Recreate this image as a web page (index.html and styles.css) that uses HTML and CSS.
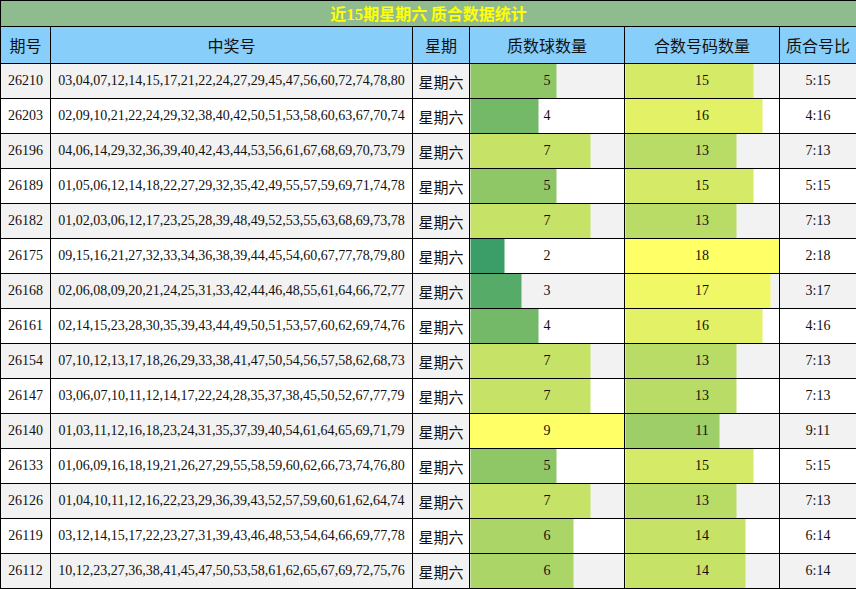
FILE: index.html
```html
<!DOCTYPE html>
<html lang="zh">
<head>
<meta charset="utf-8">
<link rel="stylesheet" href="styles.css">
</head>
<body>
<table class="stats">
<colgroup>
<col class="c-issue"><col class="c-nums"><col class="c-day"><col class="c-prime"><col class="c-comp"><col class="c-ratio">
</colgroup>
<thead>
<tr class="title-row"><th colspan="6">近<span class="num">15</span>期星期六 质合数据统计</th></tr>
<tr class="head-row"><th>期号</th><th>中奖号</th><th>星期</th><th>质数球数量</th><th>合数号码数量</th><th>质合号比</th></tr>
</thead>
<tbody>
<tr><td>26210</td><td>03,04,07,12,14,15,17,21,22,24,27,29,45,47,56,60,72,74,78,80</td><td class="day">星期六</td><td class="bar" style="--w:55.56%;--c:#8FC767">5</td><td class="bar" style="--w:83.33%;--c:#D5EA67">15</td><td>5:15</td></tr>
<tr><td>26203</td><td>02,09,10,21,22,24,29,32,38,40,42,50,51,53,58,60,63,67,70,74</td><td class="day">星期六</td><td class="bar" style="--w:44.44%;--c:#73B968">4</td><td class="bar" style="--w:88.89%;--c:#E3F166">16</td><td>4:16</td></tr>
<tr><td>26196</td><td>04,06,14,29,32,36,39,40,42,43,44,53,56,61,67,68,69,70,73,79</td><td class="day">星期六</td><td class="bar" style="--w:77.78%;--c:#C7E367">7</td><td class="bar" style="--w:72.22%;--c:#B9DC67">13</td><td>7:13</td></tr>
<tr><td>26189</td><td>01,05,06,12,14,18,22,27,29,32,35,42,49,55,57,59,69,71,74,78</td><td class="day">星期六</td><td class="bar" style="--w:55.56%;--c:#8FC767">5</td><td class="bar" style="--w:83.33%;--c:#D5EA67">15</td><td>5:15</td></tr>
<tr><td>26182</td><td>01,02,03,06,12,17,23,25,28,39,48,49,52,53,55,63,68,69,73,78</td><td class="day">星期六</td><td class="bar" style="--w:77.78%;--c:#C7E367">7</td><td class="bar" style="--w:72.22%;--c:#B9DC67">13</td><td>7:13</td></tr>
<tr><td>26175</td><td>09,15,16,21,27,32,33,34,36,38,39,44,45,54,60,67,77,78,79,80</td><td class="day">星期六</td><td class="bar" style="--w:22.22%;--c:#3B9D68">2</td><td class="bar" style="--w:100%;--c:#FFFF66">18</td><td>2:18</td></tr>
<tr><td>26168</td><td>02,06,08,09,20,21,24,25,31,33,42,44,46,48,55,61,64,66,72,77</td><td class="day">星期六</td><td class="bar" style="--w:33.33%;--c:#57AB68">3</td><td class="bar" style="--w:94.44%;--c:#F1F866">17</td><td>3:17</td></tr>
<tr><td>26161</td><td>02,14,15,23,28,30,35,39,43,44,49,50,51,53,57,60,62,69,74,76</td><td class="day">星期六</td><td class="bar" style="--w:44.44%;--c:#73B968">4</td><td class="bar" style="--w:88.89%;--c:#E3F166">16</td><td>4:16</td></tr>
<tr><td>26154</td><td>07,10,12,13,17,18,26,29,33,38,41,47,50,54,56,57,58,62,68,73</td><td class="day">星期六</td><td class="bar" style="--w:77.78%;--c:#C7E367">7</td><td class="bar" style="--w:72.22%;--c:#B9DC67">13</td><td>7:13</td></tr>
<tr><td>26147</td><td>03,06,07,10,11,12,14,17,22,24,28,35,37,38,45,50,52,67,77,79</td><td class="day">星期六</td><td class="bar" style="--w:77.78%;--c:#C7E367">7</td><td class="bar" style="--w:72.22%;--c:#B9DC67">13</td><td>7:13</td></tr>
<tr><td>26140</td><td>01,03,11,12,16,18,23,24,31,35,37,39,40,54,61,64,65,69,71,79</td><td class="day">星期六</td><td class="bar" style="--w:100%;--c:#FFFF66">9</td><td class="bar" style="--w:61.11%;--c:#9DCE67">11</td><td>9:11</td></tr>
<tr><td>26133</td><td>01,06,09,16,18,19,21,26,27,29,55,58,59,60,62,66,73,74,76,80</td><td class="day">星期六</td><td class="bar" style="--w:55.56%;--c:#8FC767">5</td><td class="bar" style="--w:83.33%;--c:#D5EA67">15</td><td>5:15</td></tr>
<tr><td>26126</td><td>01,04,10,11,12,16,22,23,29,36,39,43,52,57,59,60,61,62,64,74</td><td class="day">星期六</td><td class="bar" style="--w:77.78%;--c:#C7E367">7</td><td class="bar" style="--w:72.22%;--c:#B9DC67">13</td><td>7:13</td></tr>
<tr><td>26119</td><td>03,12,14,15,17,22,23,27,31,39,43,46,48,53,54,64,66,69,77,78</td><td class="day">星期六</td><td class="bar" style="--w:66.67%;--c:#ABD567">6</td><td class="bar" style="--w:77.78%;--c:#C7E367">14</td><td>6:14</td></tr>
<tr><td>26112</td><td>10,12,23,27,36,38,41,45,47,50,53,58,61,62,65,67,69,72,75,76</td><td class="day">星期六</td><td class="bar" style="--w:66.67%;--c:#ABD567">6</td><td class="bar" style="--w:77.78%;--c:#C7E367">14</td><td>6:14</td></tr>
</tbody>
</table>
</body>
</html>
```
FILE: styles.css
```css
html, body {
  margin: 0;
  padding: 0;
  background: #fff;
}
.stats {
  border-collapse: collapse;
  table-layout: fixed;
  width: 856px;
  font-family: "Liberation Serif", "Noto Sans CJK SC", serif;
  font-size: 14px;
  color: #111;
}
.c-issue { width: 50px; }
.c-nums { width: 362px; }
.c-day { width: 57px; }
.c-prime { width: 155px; }
.c-comp { width: 155px; }
.c-ratio { width: 77px; }
.stats th, .stats td {
  border: 1px solid #000;
  padding: 0;
  text-align: center;
  vertical-align: middle;
  white-space: nowrap;
  overflow: hidden;
}
.title-row th {
  height: 25px;
  background: #8FBC8F;
  color: #FFFF00;
  font-family: "Noto Sans CJK SC", sans-serif;
  font-weight: bold;
  font-size: 16px;
  line-height: 20px;
}
.title-row .num {
  font-family: "Liberation Serif", serif;
  font-size: 17px;
}
.head-row th {
  height: 36px;
  background: #87CEFA;
  font-family: "Noto Sans CJK SC", sans-serif;
  font-weight: normal;
  font-size: 16px;
  color: #111;
}
.stats tbody td {
  height: 34px;
}
.stats tbody tr:nth-child(odd) td {
  background-color: #F2F2F2;
}
.stats tbody tr:nth-child(even) td {
  background-color: #FFFFFF;
}
.stats tbody td.day {
  font-family: "Noto Sans CJK SC", sans-serif;
  font-size: 15px;
}
.stats tbody td.bar {
  background-image: linear-gradient(to right, var(--c) var(--w), transparent var(--w));
}
```
